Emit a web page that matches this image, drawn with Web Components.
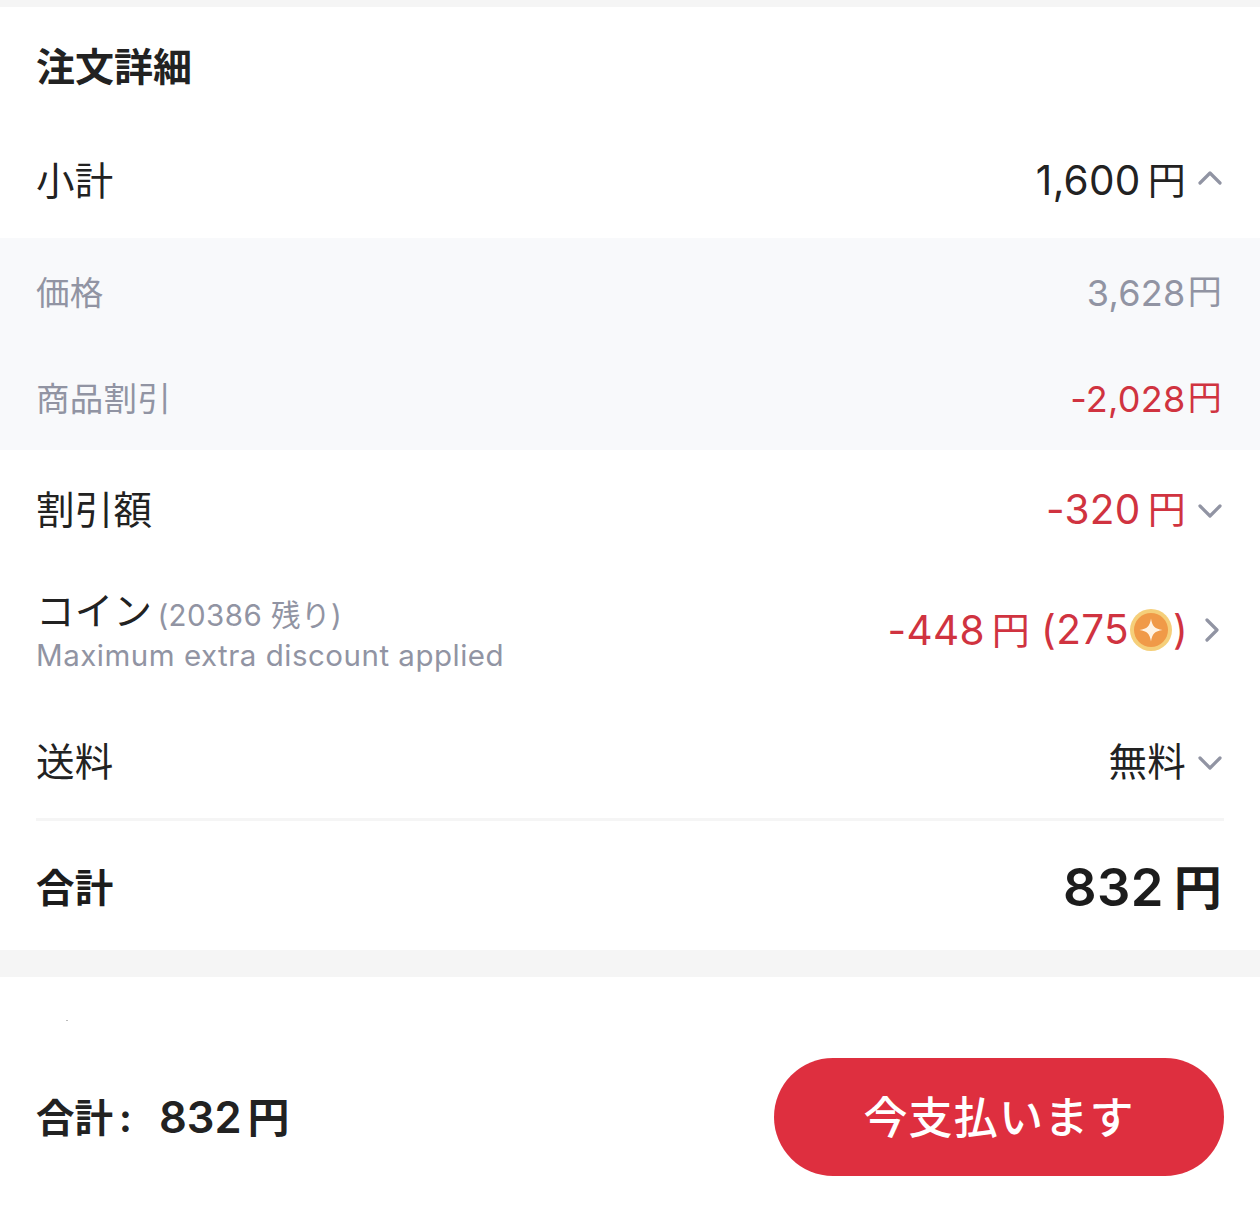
<!DOCTYPE html>
<html lang="ja"><head><meta charset="utf-8">
<style>
html,body{margin:0;padding:0;background:#fff}
body{width:1260px;height:1230px;overflow:hidden;font-family:Inter,"Noto Sans CJK JP",sans-serif;color:#222}
</style></head><body>
<order-details></order-details>
<script>
const FONT='Inter,"Noto Sans CJK JP",sans-serif';
const ICONS={
up:'<path d="M2 13 L12 3 L22 13"/>',
down:'<path d="M2 3 L12 13 L22 3"/>',
right:'<path d="M3 2 L13 12 L3 22"/>'
};
class UiIcon extends HTMLElement{
  constructor(){super();this.attachShadow({mode:'open'});}
  connectedCallback(){
    const n=this.getAttribute('name');
    const box=n==='right'?'0 0 16 24':'0 0 24 16';
    const w=n==='right'?16:24,h=n==='right'?24:16;
    this.shadowRoot.innerHTML=`<style>:host{display:inline-flex;width:${w}px;height:${h}px;margin:var(--im,2px 0 0 0)}svg{display:block;fill:none;stroke:#9194a3;stroke-width:3.2;stroke-linecap:round;stroke-linejoin:round}</style><svg width="${w}" height="${h}" viewBox="${box}">${ICONS[n]}</svg>`;
  }
}
customElements.define('ui-icon',UiIcon);
class CoinIcon extends HTMLElement{
  constructor(){super();this.attachShadow({mode:'open'}).innerHTML=`<style>:host{display:inline-flex;width:42px;height:42px;margin:0 1px 0 1px}</style>
  <svg width="42" height="42" viewBox="0 0 42 42"><circle cx="21" cy="21" r="21" fill="#f5cf7a"/><circle cx="21" cy="21" r="17" fill="#f09a48"/><path d="M21 9.5 C22 17 25 20 32.5 21 C25 22 22 25 21 32.5 C20 25 17 22 9.5 21 C17 20 20 17 21 9.5Z" fill="#fff4e4"/></svg>`;}
}
customElements.define('coin-icon',CoinIcon);
class YenAmount extends HTMLElement{
  constructor(){super();this.attachShadow({mode:'open'}).innerHTML=`<style>
  :host{display:inline-flex;align-items:center;white-space:nowrap}
  .n{font-size:var(--ns,40.5px);font-weight:var(--nw,400);padding-top:4px}
  .y{font-size:var(--ys,38px);margin-left:var(--yg,7px);font-weight:var(--yw,400);padding-bottom:2px}
  </style><span class="n"><slot></slot></span><span class="y">円</span>`;}
}
customElements.define('yen-amount',YenAmount);
class PriceRow extends HTMLElement{
  constructor(){super();this.attachShadow({mode:'open'}).innerHTML=`<style>
  :host{display:flex;align-items:center;justify-content:space-between;padding:var(--pt,0) 38px 0 36px;font-size:38.5px;letter-spacing:.3px;height:var(--h,114px);box-sizing:border-box;color:#222}
  :host([muted]){font-size:33.5px;color:#9194a3;padding-right:38px;--ns:36px;--ys:34px;--yg:2px}
  :host([strong]){font-weight:700;color:#1c1c1c;padding-right:38px}
  .l,.v{padding-bottom:var(--tb,6px)}
  .r{display:flex;align-items:center;gap:var(--ig,12px)}
  .v{color:var(--vc,inherit);display:flex;align-items:center}
  </style><div class="l"><slot name="label"></slot></div><div class="r"><div class="v"><slot name="value"></slot></div><slot name="icon"></slot></div>`;}
}
customElements.define('price-row',PriceRow);
class OrderDetails extends HTMLElement{
  constructor(){super();this.attachShadow({mode:'open'}).innerHTML=`<style>
  :host{display:block;width:1260px;font-family:${FONT}}
  .bar{height:7px;background:#f5f5f5}
  h2{margin:0;height:117px;box-sizing:border-box;padding:2px 36px 0;display:flex;align-items:center;font-size:39px;font-weight:700;color:#222;line-height:1}
  .sub{background:#f8f9fb;height:212px;--tb:2px}
  .gap{height:27px;background:#f5f5f5}
  .coinl{display:flex;flex-direction:column;line-height:1;margin-top:5px}
  .coinl .t{font-size:38.5px;display:flex;align-items:baseline;gap:5px;height:43px}
  .coinl .t small{font-size:29.5px;color:#9194a3;letter-spacing:.45px;position:relative;top:1px}
  .coinl .s{font-size:29.5px;color:#9194a3;letter-spacing:.5px;margin-top:2px;line-height:36px}
  .rule{height:3px;background:#f5f5f5;margin:0 36px}
  .foot{display:flex;align-items:center;justify-content:space-between;padding:81px 36px 54px 36px;position:relative;height:253px;box-sizing:border-box}
  .ft{display:flex;align-items:center;font-size:38.5px;font-weight:700;color:#222;padding-bottom:4px;--ns:43.5px;--nw:600;--ys:42px;--yw:600;--yg:6px}
  .ft b{font-weight:700;margin-right:27px}
  .ft b i{font-style:normal;margin-left:6px}
  button{all:unset;width:450px;height:118px;border-radius:59px;background:#de2f3f;color:#fff;font:500 44px ${FONT};letter-spacing:1.2px;display:flex;align-items:center;justify-content:center;padding-bottom:4px;box-sizing:border-box}
  .dot{position:absolute;left:66px;top:43px;width:2px;height:1px;background:#bbb}
  </style>
  <div class="bar"></div>
  <h2>注文詳細</h2>
  <price-row style="--im:0 0 6px 0"><span slot="label">小計</span><yen-amount slot="value">1,600</yen-amount><ui-icon slot="icon" name="up"></ui-icon></price-row>
  <div class="sub">
    <price-row muted style="--h:107px"><span slot="label">価格</span><yen-amount slot="value">3,628</yen-amount></price-row>
    <price-row muted style="--h:105px;--vc:#d03340"><span slot="label">商品割引</span><yen-amount slot="value">-2,028</yen-amount></price-row>
  </div>
  <price-row style="--h:120px;--vc:#d03340"><span slot="label">割引額</span><yen-amount slot="value">-320</yen-amount><ui-icon slot="icon" name="down"></ui-icon></price-row>
  <price-row style="--h:120px;--vc:#d03340;--ig:16px;--tb:0px;--im:0 2px 0 0">
    <div class="coinl" slot="label"><div class="t">コイン<small>(20386 残り)</small></div><div class="s">Maximum extra discount applied</div></div>
    <yen-amount slot="value" style="margin-bottom:3px">-448</yen-amount><span slot="value" style="font-size:40.5px;margin-left:11px;padding-bottom:2px">(275</span><coin-icon slot="value"></coin-icon><span slot="value" style="font-size:40.5px;padding-bottom:2px">)</span><ui-icon slot="icon" name="right"></ui-icon>
  </price-row>
  <price-row style="--h:128px;--pt:16px"><span slot="label">送料</span><span slot="value">無料</span><ui-icon slot="icon" name="down"></ui-icon></price-row>
  <div class="rule"></div>
  <price-row strong style="--h:129px;--pt:4px;--ns:52.5px;--nw:600;--ys:48px;--yw:600;--yg:10px"><span slot="label">合計</span><yen-amount slot="value">832</yen-amount></price-row>
  <div class="gap"></div>
  <div class="foot"><i class="dot"></i><div class="ft"><b>合計<i>:</i></b><yen-amount>832</yen-amount></div><button>今支払います</button></div>`;}
}
customElements.define('order-details',OrderDetails);
</script>
</body></html>
